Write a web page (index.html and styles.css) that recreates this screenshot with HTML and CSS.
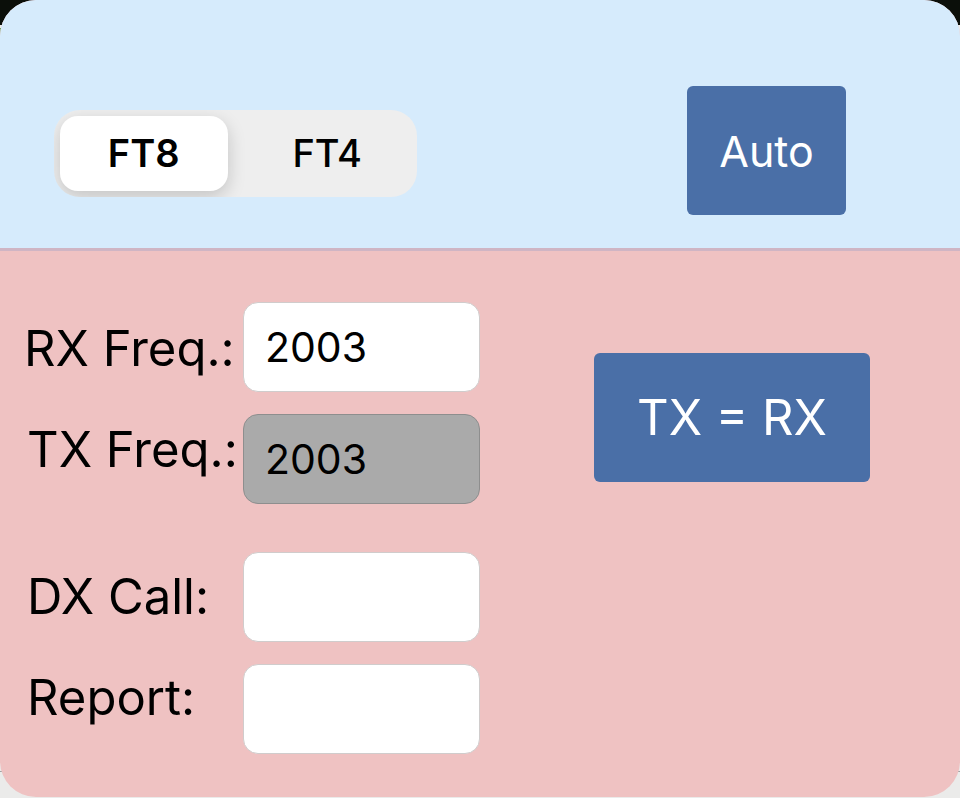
FILE: index.html
```html
<!DOCTYPE html>
<html lang="en">
<head>
<meta charset="utf-8">
<meta name="viewport" content="width=device-width, initial-scale=1">
<title>FT8 / FT4</title>
<link rel="stylesheet" href="styles.css">
</head>
<body>
<main class="popover">
  <header class="mode-bar">
    <div class="segmented" role="radiogroup" aria-label="Mode">
      <label class="segment"><input class="segment-input" type="radio" name="mode" checked><span class="segment-face">FT8</span></label>
      <label class="segment"><input class="segment-input" type="radio" name="mode"><span class="segment-face">FT4</span></label>
    </div>
    <button class="button button-auto" type="button">Auto</button>
  </header>
  <form class="panel">
    <div class="labels">
      <div class="label-group">
        <label class="label" for="rx">RX Freq.:</label>
        <label class="label label-inset" for="tx">TX Freq.:</label>
      </div>
      <div class="label-group">
        <label class="label label-inset" for="dx">DX Call:</label>
        <label class="label label-inset" for="report">Report:</label>
      </div>
    </div>
    <div class="fields">
      <div class="field-group">
        <input class="field" id="rx" type="text" value="2003">
        <input class="field field-locked" id="tx" type="text" value="2003" readonly>
      </div>
      <div class="field-group">
        <input class="field" id="dx" type="text">
        <input class="field" id="report" type="text">
      </div>
    </div>
    <button class="button button-match" type="button">TX = RX</button>
  </form>
</main>
</body>
</html>
```
FILE: styles.css
```css
* {
  box-sizing: border-box;
}

body {
  margin: 0;
  min-height: 100vh;
  display: flex;
  font-family: Inter, "Liberation Sans", sans-serif;
  color: #000;
  background:
    linear-gradient(#0b0f0a, #0b0f0a) top / 100% 25px no-repeat,
    linear-gradient(#4b8a2c, #b5cfae) 0 28px / 2px 12px no-repeat,
    linear-gradient(#9fa3a3, #9fa3a3) 0 771px / 100% 1px no-repeat,
    #ebebea;
}

.popover {
  flex: 1;
  display: flex;
  flex-direction: column;
  margin-bottom: 1px;
  border-radius: 36px;
  overflow: hidden;
  background: #efc2c2;
}

.mode-bar {
  display: flex;
  justify-content: space-between;
  align-items: flex-start;
  padding: 86px 114px 33px 54px;
  background: #d6ebfc;
  border-bottom: 3px solid #cfb5c4;
}

.segmented {
  display: flex;
  gap: 16px;
  width: 363px;
  margin-top: 24px;
  padding: 6px;
  border-radius: 26px;
  background: #eee;
  overflow: hidden;
}

.segment {
  flex: 1;
  position: relative;
}

.segment-input {
  position: absolute;
  inset: 0;
  margin: 0;
  opacity: 0;
}

.segment-face {
  display: block;
  border-radius: 18px;
  font-size: 38px;
  line-height: 75px;
  text-align: center;
  font-weight: 500;
}

.segment-input:checked + .segment-face {
  font-weight: 600;
  background: #fff;
  box-shadow: 0 6px 18px rgba(0, 0, 0, 0.18);
}

.button {
  border: 0;
  border-radius: 6px;
  padding: 0;
  height: 129px;
  font-family: inherit;
  color: #fff;
  background: #4a6fa7;
}

.button-auto {
  width: 159px;
  font-size: 43px;
}

.button-match {
  width: 276px;
  margin: 51px 0 0 114px;
  font-size: 49px;
}

.panel {
  flex: 1;
  display: flex;
  align-items: flex-start;
  padding: 51px 24px 42px;
}

.labels {
  width: 219px;
  display: flex;
  flex-direction: column;
  gap: 87px;
  padding-top: 17px;
}

.label-group {
  display: flex;
  flex-direction: column;
  gap: 41px;
}

.label {
  font-size: 49px;
  line-height: 60px;
  white-space: nowrap;
}

.label-inset {
  padding-left: 3px;
}

.fields {
  width: 237px;
  display: flex;
  flex-direction: column;
  gap: 48px;
}

.field-group {
  display: flex;
  flex-direction: column;
  gap: 22px;
}

.field {
  width: 100%;
  height: 90px;
  padding: 0 21px;
  border: 1px solid #d0cccc;
  border-radius: 15px;
  font-family: inherit;
  font-size: 41px;
  color: #000;
  background: #fff;
}

.field-locked {
  border-color: #8e8e8e;
  background: #aaa;
}
```
